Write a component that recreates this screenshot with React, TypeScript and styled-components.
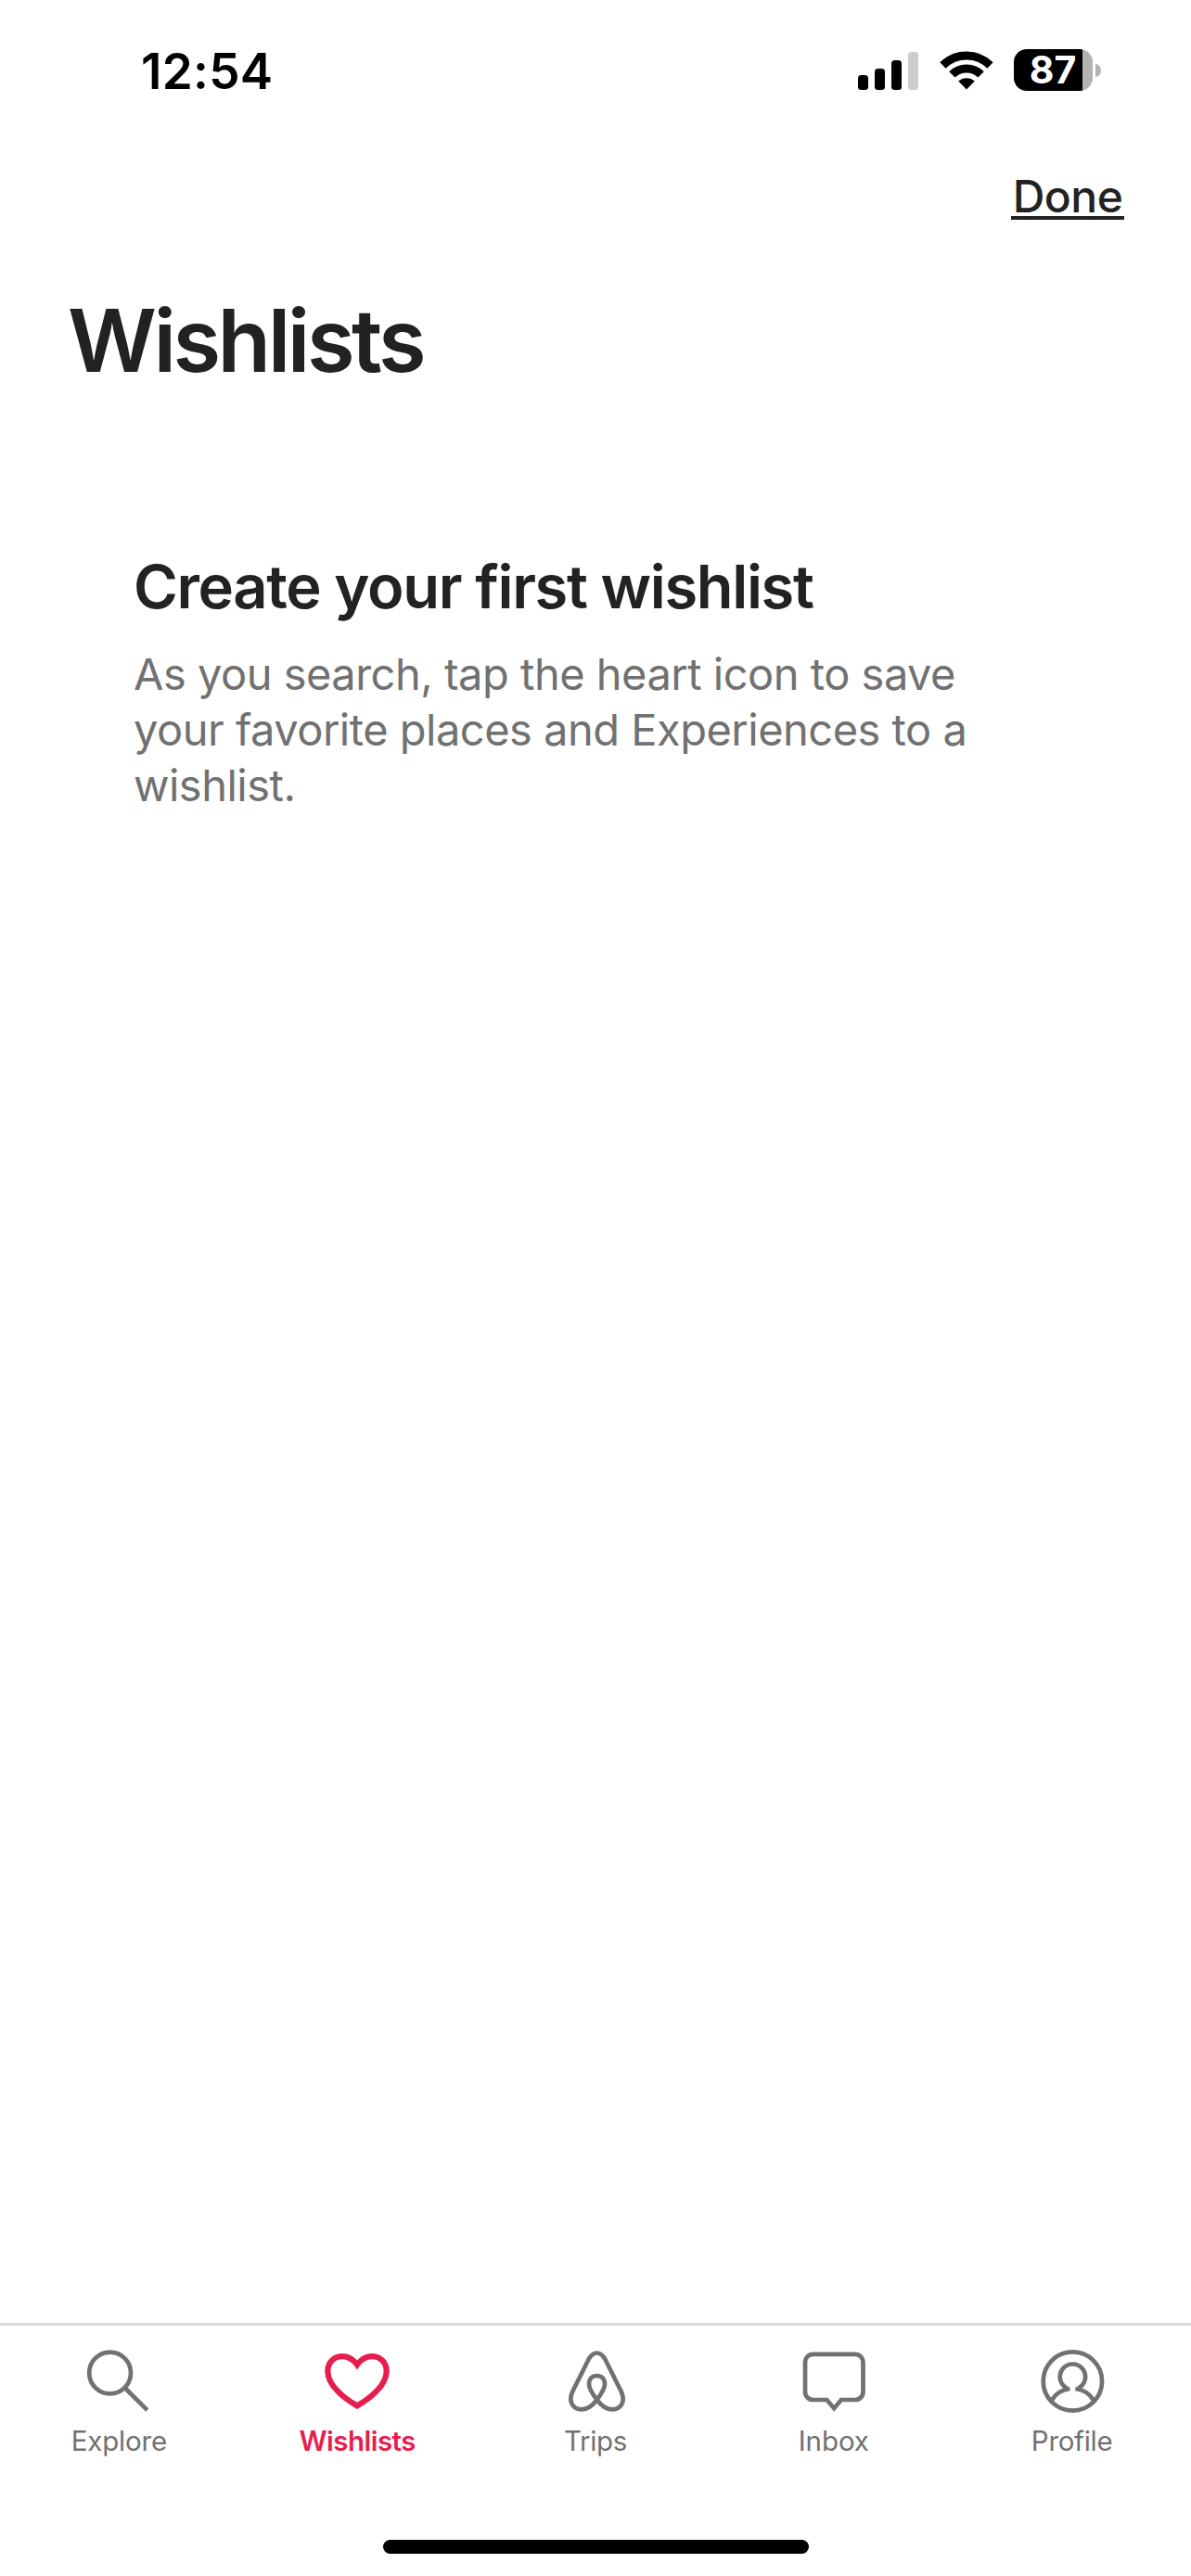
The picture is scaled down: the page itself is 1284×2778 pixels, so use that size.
import React from "react";
import styled, { createGlobalStyle } from "styled-components";

const GlobalStyle = createGlobalStyle`
  *, *::before, *::after { box-sizing: border-box; }
  body { margin: 0; background: #fff; }
  h1, h2, p { margin: 0; }
  button { border: 0; padding: 0; background: none; font: inherit; color: inherit; }
`;

const Screen = styled.div`
  display: flex;
  flex-direction: column;
  width: 1284px;
  height: 2778px;
  background: #fff;
  color: #222;
  font-family: Inter, "Liberation Sans", sans-serif;
`;

const StatusBar = styled.header`
  display: flex;
  justify-content: space-between;
  align-items: center;
  height: 151px;
  padding: 0 97px 0 152px;
  color: #000;
`;

const Time = styled.span`
  font-size: 53px;
  line-height: 60px;
  font-weight: 600;
  letter-spacing: 0.3px;
  padding-top: 2px;
`;

const StatusIcons = styled.div`
  display: flex;
  align-items: center;
`;

const Signal = styled.div`
  display: flex;
  align-items: flex-end;
  gap: 7px;
  height: 43px;
  margin-right: 23px;
`;

const SignalBar = styled.span<{ $height: number; $off?: boolean }>`
  width: 11px;
  height: ${(p) => p.$height}px;
  border-radius: 3.5px;
  background: ${(p) => (p.$off ? "#ccc" : "#000")};
`;

const WifiIcon = styled.svg`
  width: 58px;
  height: 43px;
  margin-right: 22px;
`;

const Battery = styled.div`
  display: flex;
  align-items: center;
  gap: 3px;
`;

const BatteryBody = styled.div`
  display: flex;
  align-items: center;
  justify-content: center;
  width: 85px;
  height: 45px;
  padding-right: 1px;
  border-radius: 14px;
  background: linear-gradient(to right, #000 74px, #b2b2b2 74px);
  color: #fff;
  font-size: 41px;
  line-height: 45px;
  font-weight: 700;
`;

const BatteryNub = styled.span`
  width: 6px;
  height: 14px;
  border-radius: 0 6px 6px 0 / 0 7px 7px 0;
  background: #b2b2b2;
`;

const Toolbar = styled.div`
  display: flex;
  justify-content: flex-end;
  height: 160px;
  padding: 39px 72px 0 0;
`;

const DoneButton = styled.button`
  display: flex;
  justify-content: center;
  align-self: flex-start;
  width: 122px;
  border-bottom: 4px solid #222;
  font-size: 48px;
  line-height: 43px;
  font-weight: 500;
  letter-spacing: -0.5px;
`;

const Content = styled.main`
  flex: 1;
  padding: 0 73px;
`;

const Title = styled.h1`
  font-size: 94px;
  line-height: 112px;
  font-weight: 600;
  letter-spacing: -3.5px;
`;

const EmptyState = styled.section`
  padding: 170px 71px 0;
`;

const Heading = styled.h2`
  font-size: 65px;
  line-height: 80px;
  font-weight: 600;
  letter-spacing: -1.35px;
  white-space: nowrap;
`;

const Body = styled.p`
  margin-top: 24px;
  color: #717171;
  font-size: 47px;
  line-height: 60px;
  font-weight: 400;
  letter-spacing: -0.5px;
  white-space: nowrap;
`;

const TabBar = styled.nav`
  display: grid;
  grid-template-columns: repeat(5, 1fr);
  height: 234px;
  border-top: 3px solid #ddd;
`;

const Tab = styled.button<{ $active?: boolean }>`
  display: flex;
  flex-direction: column;
  align-items: center;
  padding-top: 20px;
  color: ${(p) => (p.$active ? "#e61e4d" : "#717171")};
  font-weight: ${(p) => (p.$active ? 600 : 400)};
`;

const TabIcon = styled.svg`
  width: 80px;
  height: 80px;
  fill: none;
  stroke: currentColor;
  stroke-width: 4.7;
`;

const TabLabel = styled.span<{ $tracking: number }>`
  margin-top: 6px;
  font-size: 29.5px;
  line-height: 36px;
  letter-spacing: ${(p) => p.$tracking}px;
`;

const HomeArea = styled.footer`
  display: flex;
  justify-content: center;
  height: 39px;
`;

const HomeIndicator = styled.span`
  width: 459px;
  height: 15px;
  border-radius: 8px;
  background: #000;
`;

const tabs = [
  {
    label: "Explore",
    tracking: -0.2,
    icon: (
      <>
        <circle cx="30.6" cy="31" r="22.4" />
        <path d="M47 47.5 70.8 71.2" />
      </>
    ),
  },
  {
    label: "Wishlists",
    tracking: -0.5,
    active: true,
    icon: (
      <path
        strokeWidth="6.2"
        d="M40 66.5C27 59 8.3 45 8.3 29C8.3 19.5 15.3 13.1 24 13.1C30.5 13.1 35.7 16.2 40 22.2C44.3 16.2 49.5 13.1 56 13.1C64.7 13.1 71.7 19.5 71.7 29C71.7 45 53 59 40 66.5Z"
      />
    ),
  },
  {
    label: "Trips",
    tracking: -0.3,
    icon: (
      <path d="M41.5 60C37 66 31.5 70.4 25 70.4C18 70.4 13.3 65.5 13.3 59C13.3 56 14 54 15.3 51L32.5 16.5C35 11.8 37.8 9.5 41.5 9.5C45.2 9.5 48 11.8 50.5 16.5L67.7 51C69 54 69.7 56 69.7 59C69.7 65.5 65 70.4 58 70.4C51.5 70.4 46 66 41.5 60C37 54 33 48 33 43C33 37.5 36.5 34 41.5 34C46.5 34 50 37.5 50 43C50 48 46 54 41.5 60Z" />
    ),
  },
  {
    label: "Inbox",
    tracking: -0.1,
    icon: (
      <path d="M17.5 10.8H63A8.5 8.5 0 0 1 71.5 19.3V51.5A8.5 8.5 0 0 1 63 60H48L40.2 69.2L32.4 60H17.5A8.5 8.5 0 0 1 9 51.5V19.3A8.5 8.5 0 0 1 17.5 10.8Z" />
    ),
  },
  {
    label: "Profile",
    tracking: -0.3,
    icon: (
      <>
        <circle cx="40.4" cy="40" r="31.7" />
        <path d="M34 47.3A13.7 13.7 0 1 1 46.8 47.3" />
        <path d="M17.8 60.5C22 53.5 29 49 37.4 48" />
        <path d="M43.4 48C51.8 49 58.8 53.5 63 60.5" />
      </>
    ),
  },
];

export default function App() {
  return (
    <>
      <GlobalStyle />
      <Screen>
        <StatusBar>
          <Time>12:54</Time>
          <StatusIcons>
            <Signal>
              <SignalBar $height={16} />
              <SignalBar $height={23} />
              <SignalBar $height={32} />
              <SignalBar $height={41} $off />
            </Signal>
            <WifiIcon viewBox="0 0 58 43">
              <g fill="none" stroke="#000" strokeWidth="9">
                <path d="M3.5 16.5A36.1 36.1 0 0 1 54.5 16.5" />
                <path d="M13.4 26.4A22.1 22.1 0 0 1 44.6 26.4" />
              </g>
              <path d="M29 42.6 20.2 33.6A13 13 0 0 1 37.8 33.6Z" />
            </WifiIcon>
            <Battery>
              <BatteryBody>87</BatteryBody>
              <BatteryNub />
            </Battery>
          </StatusIcons>
        </StatusBar>
        <Toolbar>
          <DoneButton>Done</DoneButton>
        </Toolbar>
        <Content>
          <Title>Wishlists</Title>
          <EmptyState>
            <Heading>Create your first wishlist</Heading>
            <Body>
              As you search, tap the heart icon to save
              <br />
              your favorite places and Experiences to a
              <br />
              wishlist.
            </Body>
          </EmptyState>
        </Content>
        <TabBar>
          {tabs.map((tab) => (
            <Tab key={tab.label} $active={tab.active}>
              <TabIcon viewBox="0 0 80 80">{tab.icon}</TabIcon>
              <TabLabel $tracking={tab.tracking}>{tab.label}</TabLabel>
            </Tab>
          ))}
        </TabBar>
        <HomeArea>
          <HomeIndicator />
        </HomeArea>
      </Screen>
    </>
  );
}
